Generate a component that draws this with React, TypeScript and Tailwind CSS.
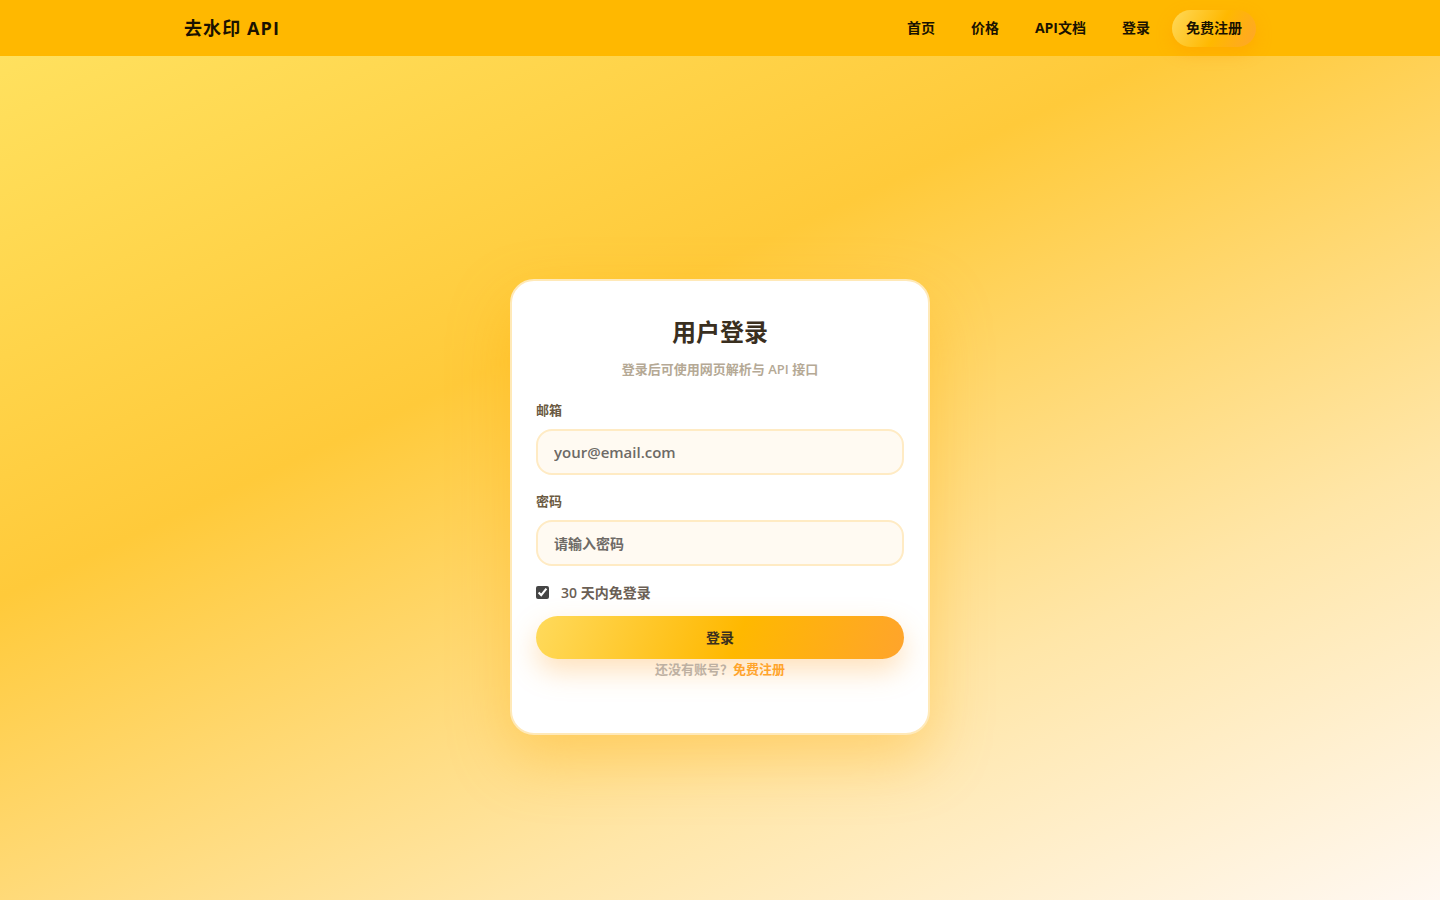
export default function App() {
  return (
    <div
      className="min-h-screen w-full bg-[linear-gradient(155deg,#ffe362_0%,#ffca3a_38%,#ffe6a8_72%,#fff8f2_100%)]"
      style={{ fontFamily: '"Open Sans", "Noto Sans CJK SC", sans-serif' }}
    >
      {/* Header */}
      <header className="h-14 w-full bg-[#ffb800]">
        <div className="mx-auto flex h-full max-w-[1072px] items-center justify-between">
          <div className="text-[18px] leading-6 font-bold tracking-[0.06em] text-[#1a1200]">去水印 API</div>
          <nav className="flex items-center gap-2 text-[14px] leading-5 font-bold text-[#1a1200]">
            <a className="px-3.5 py-2">首页</a>
            <a className="px-3.5 py-2">价格</a>
            <a className="px-3.5 py-2">API文档</a>
            <a className="px-3.5 py-2">登录</a>
            <a className="flex h-[37px] items-center rounded-full bg-[linear-gradient(120deg,#ffd95a,#ffb800_55%,#ffa52a)] px-3.5 shadow-[0_6px_16px_rgba(255,150,0,0.35)]">
              免费注册
            </a>
          </nav>
        </div>
      </header>

      {/* Main */}
      <main className="flex justify-center pt-[223px] pb-20">
        <div className="w-[420px] rounded-[24px] border-2 border-[#ffe9b8] bg-white px-6 pt-[35px] pb-[54px] shadow-[0_24px_60px_rgba(255,170,0,0.35)]">
          <h1 className="text-center text-[24px] leading-8 font-bold text-[#3a2f1f]">用户登录</h1>
          <p className="mt-[11px] text-center text-[13px] leading-5 font-semibold text-[#b5a995]">
            登录后可使用网页解析与 API 接口
          </p>

          <label className="mt-[22px] block text-[13px] leading-[18px] font-semibold text-[#6b5a42]">邮箱</label>
          <input
            type="email"
            placeholder="your@email.com"
            className="mt-2.5 h-[46px] w-full rounded-2xl border-2 border-[#ffebc4] bg-[#fffaf2] px-4 text-[15px] font-semibold text-[#555] outline-none placeholder:text-[#6e6a66]"
          />

          <label className="mt-[17px] block text-[13px] leading-[18px] font-semibold text-[#6b5a42]">密码</label>
          <input
            type="password"
            placeholder="请输入密码"
            className="mt-2.5 h-[46px] w-full rounded-2xl border-2 border-[#ffebc4] bg-[#fffaf2] px-4 text-[14px] font-semibold text-[#555] outline-none placeholder:text-[#6e6a66]"
          />

          <label className="mt-4 flex h-5 items-center gap-3 text-[14px] font-semibold text-[#6b5f55]">
            <input type="checkbox" defaultChecked className="h-[13px] w-[13px] accent-[#454545]" />
            <span>30 天内免登录</span>
          </label>

          <button className="mt-[14px] h-[43px] w-full rounded-full bg-[linear-gradient(110deg,#ffda5c_0%,#ffb800_55%,#ffa42c_100%)] text-[14px] font-semibold text-[#3a2f1f] shadow-[0_12px_28px_rgba(255,170,60,0.35)]">
            登录
          </button>

          <p className="text-center text-[13px] leading-5 font-bold text-[#bdb0a2]">
            还没有账号？<a className="text-[#ffa42c]">免费注册</a>
          </p>
        </div>
      </main>
    </div>
  );
}
